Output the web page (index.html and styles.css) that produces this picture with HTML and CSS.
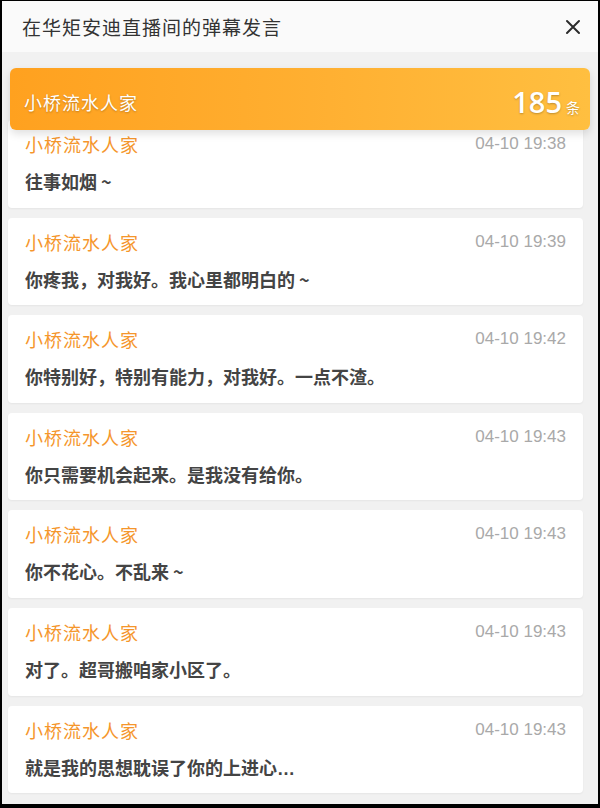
FILE: index.html
```html
<!DOCTYPE html>
<html lang="zh-CN">
<head>
<meta charset="utf-8">
<title>弹幕发言</title>
<link rel="stylesheet" href="styles.css">
</head>
<body>
<div class="panel">
  <div class="header">
    <div class="title">在华矩安迪直播间的弹幕发言</div>
    <svg class="close" width="16" height="16" viewBox="0 0 16 16"><path d="M2 2 L14 14 M14 2 L2 14" stroke="#2b2b2b" stroke-width="2" stroke-linecap="round"/></svg>
  </div>
  <div class="content">
    <div class="list">
      <div class="card">
        <div class="row"><span class="name">小桥流水人家</span><span class="time">04-10 19:38</span></div>
        <div class="msg">往事如烟 ~</div>
      </div>
      <div class="card">
        <div class="row"><span class="name">小桥流水人家</span><span class="time">04-10 19:39</span></div>
        <div class="msg">你疼我，对我好。我心里都明白的 ~</div>
      </div>
      <div class="card">
        <div class="row"><span class="name">小桥流水人家</span><span class="time">04-10 19:42</span></div>
        <div class="msg">你特别好，特别有能力，对我好。一点不渣。</div>
      </div>
      <div class="card">
        <div class="row"><span class="name">小桥流水人家</span><span class="time">04-10 19:43</span></div>
        <div class="msg">你只需要机会起来。是我没有给你。</div>
      </div>
      <div class="card">
        <div class="row"><span class="name">小桥流水人家</span><span class="time">04-10 19:43</span></div>
        <div class="msg">你不花心。不乱来 ~</div>
      </div>
      <div class="card">
        <div class="row"><span class="name">小桥流水人家</span><span class="time">04-10 19:43</span></div>
        <div class="msg">对了。超哥搬咱家小区了。</div>
      </div>
      <div class="card">
        <div class="row"><span class="name">小桥流水人家</span><span class="time">04-10 19:43</span></div>
        <div class="msg">就是我的思想耽误了你的上进心<span class="ell">…</span></div>
      </div>
    </div>
    <div class="banner">
      <span class="banner-name">小桥流水人家</span>
      <span class="count"><span class="num">185</span><span class="unit">条</span></span>
    </div>
  </div>
</div>
</body>
</html>
```
FILE: styles.css
```css
html {
  background: #000;
}
body {
  margin: 1px 2px 4px 2px;
  height: 803px;
  overflow: hidden;
  background: #f1f1f1;
  font-family: "Noto Sans CJK SC", "Noto Sans", sans-serif;
}
.panel {
  display: flex;
  flex-direction: column;
  height: 100%;
}
.header {
  height: 51px;
  flex: none;
  background: #fafafa;
  display: flex;
  align-items: center;
  justify-content: space-between;
  padding: 0 17px 0 20px;
  box-sizing: border-box;
}
.title {
  font-size: 19px;
  color: #333;
  letter-spacing: 1px;
}
.close {
  display: block;
  margin-top: 1px;
}
.content {
  position: relative;
  flex: 1;
  overflow: hidden;
}
.list {
  display: flex;
  flex-direction: column;
  gap: 10px;
  padding: 68px 15px 0 6px;
}
.card {
  height: 87.6px;
  flex: none;
  box-sizing: border-box;
  background: #fff;
  border-radius: 4px;
  box-shadow: 0 1px 2px rgba(0, 0, 0, 0.05);
  padding: 12px 17px 0 17px;
}
.row {
  display: flex;
  justify-content: space-between;
  align-items: center;
  height: 24px;
}
.name {
  font-size: 18px;
  color: #f5962c;
  letter-spacing: 1px;
}
.time {
  font-family: "Liberation Sans", "Noto Sans", sans-serif;
  font-size: 17px;
  color: #a9a9a9;
}
.msg {
  margin-top: 13px;
  line-height: 24px;
  font-size: 18px;
  font-weight: bold;
  color: #444;
}
.ell {
  font-family: "Liberation Sans", sans-serif;
}
.banner {
  position: absolute;
  top: 16px;
  left: 8px;
  right: 8px;
  height: 62px;
  border-radius: 6px;
  background: linear-gradient(90deg, #ffa11f 0%, #ffb032 55%, #ffbf40 100%);
  box-shadow: 0 4px 8px rgba(0, 0, 0, 0.12);
  display: flex;
  align-items: center;
  justify-content: space-between;
  padding: 6px 10px 0 14px;
  box-sizing: border-box;
  color: #fff;
  text-shadow: 0 1px 2px rgba(0, 0, 0, 0.25);
}
.banner-name {
  font-size: 18px;
  letter-spacing: 1px;
}
.count {
  display: flex;
  align-items: baseline;
}
.num {
  font-family: "Open Sans", "Noto Sans", sans-serif;
  font-weight: 600;
  font-size: 29px;
  line-height: 1;
}
.unit {
  font-size: 14px;
  margin-left: 4px;
}
```
